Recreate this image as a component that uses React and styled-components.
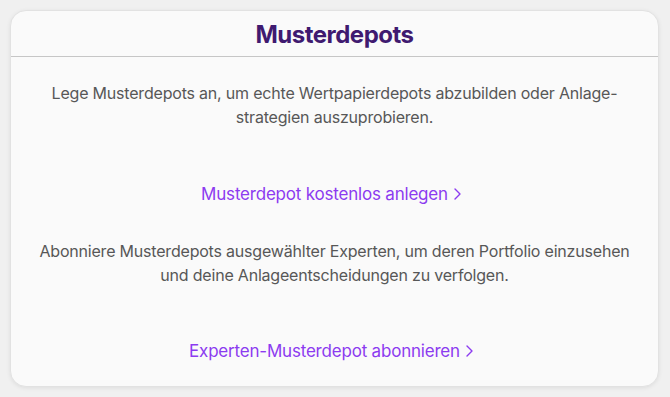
import React from "react";
import styled, { createGlobalStyle } from "styled-components";

const Global = createGlobalStyle`
  html, body { margin: 0; padding: 0; background: #f0f0f0; }
  body { font-family: Inter, "Noto Sans", "Liberation Sans", sans-serif; -webkit-font-smoothing: antialiased; }
`;

const Page = styled.div`
  padding: 10px 11px 10px 10px;
  box-sizing: border-box;
  width: 670px;
  height: 397px;
`;

const Card = styled.section`
  background: #fafafa;
  border: 1px solid #e2e2e2;
  border-radius: 16px;
  box-shadow: 0 1px 4px rgba(0, 0, 0, 0.08);
  height: 377px;
  box-sizing: border-box;
  display: flex;
  flex-direction: column;
  overflow: hidden;
`;

const Header = styled.header`
  height: 45px;
  flex-shrink: 0;
  border-bottom: 1.5px solid #c6c6c6;
  display: flex;
  align-items: center;
  justify-content: center;
`;

const Title = styled.h2`
  margin: 0;
  font-size: 24px;
  font-weight: 700;
  color: #3f1a70;
  letter-spacing: -0.5px;
  padding-top: 1px;
`;

const Body = styled.div`
  display: flex;
  flex-direction: column;
  align-items: center;
  padding: 0 8px;
`;

const Text = styled.p`
  margin: ${(p) => p.$top}px 0 0;
  font-size: 16px;
  line-height: 24px;
  letter-spacing: -0.2px;
  color: #575757;
  text-align: center;
  white-space: nowrap;
`;

const Link = styled.a`
  margin-top: ${(p) => p.$top}px;
  padding-right: 7px;
  font-size: 17px;
  line-height: 24px;
  letter-spacing: -0.2px;
  color: #8c3bf0;
  text-decoration: none;
  display: inline-flex;
  align-items: center;
  gap: 6px;
  cursor: pointer;
`;

const Chevron = () => (
  <svg width="7" height="12" viewBox="0 0 7 12" fill="none">
    <path d="M1 1l5 5-5 5" stroke="currentColor" strokeWidth="1.4" strokeLinecap="round" strokeLinejoin="round" />
  </svg>
);

export default function App() {
  return (
    <>
      <Global />
      <Page>
        <Card>
          <Header>
            <Title>Musterdepots</Title>
          </Header>
          <Body>
            <Text $top={24}>
              Lege Musterdepots an, um echte Wertpapierdepots abzubilden oder Anlage-
              <br />
              strategien auszuprobieren.
            </Text>
            <Link $top={53}>
              Musterdepot kostenlos anlegen <Chevron />
            </Link>
            <Text $top={33}>
              Abonniere Musterdepots ausgewählter Experten, um deren Portfolio einzusehen
              <br />
              und deine Anlageentscheidungen zu verfolgen.
            </Text>
            <Link $top={52}>
              Experten-Musterdepot abonnieren <Chevron />
            </Link>
          </Body>
        </Card>
      </Page>
    </>
  );
}
